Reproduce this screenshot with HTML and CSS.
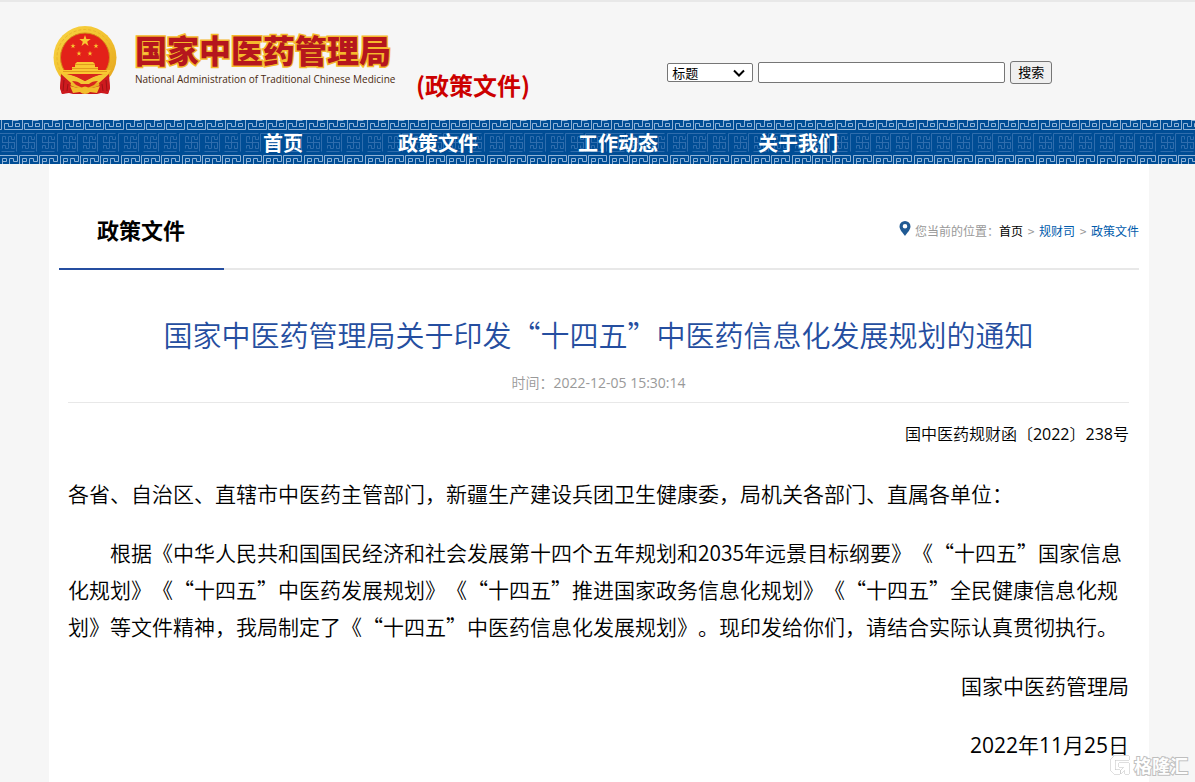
FILE: index.html
```html
<!DOCTYPE html>
<html lang="zh-CN">
<head>
<meta charset="utf-8">
<title>国家中医药管理局</title>
<link rel="stylesheet" href="styles.css">
</head>
<body>
<header class="header">
  <svg class="emblem" viewBox="0 0 64 70" aria-hidden="true">
    <defs>
      <linearGradient id="gold" x1="0" y1="0" x2="1" y2="1"><stop offset="0" stop-color="#f8d444"/><stop offset=".5" stop-color="#f2c22e"/><stop offset="1" stop-color="#e3a01c"/></linearGradient>
      <polygon id="star" points="0,-6 1.4,-1.9 5.7,-1.9 2.2,.7 3.5,4.9 0,2.3 -3.5,4.9 -2.2,.7 -5.7,-1.9 -1.4,-1.9"/>
    </defs>
    <path d="M9 47 7 62l2 6 7-1 4 1h24l4-1 7 1 2-6-2-15z" fill="#c8161d"/>
    <circle cx="32" cy="31.500" r="31.500" fill="url(#gold)"/>
    <circle cx="32" cy="31.500" r="28" fill="none" stroke="#eab52a" stroke-width="1" stroke-dasharray="3 2"/>
    <circle cx="32" cy="31.500" r="24.500" fill="#e32119" stroke="#d58b18" stroke-width="1"/>
    <g fill="#f9c831">
      <use href="#star" x="32" y="15"/>
      <use href="#star" transform="translate(20 20) scale(.45)"/>
      <use href="#star" transform="translate(43 20) scale(.45)"/>
      <use href="#star" transform="translate(26 27.500) scale(.45)"/>
      <use href="#star" transform="translate(37 27.500) scale(.45)"/>
      <path d="M24 36h16l2 2v3h3v3h13l-3 4H9l-3-4h13v-3h3v-3z"/>
    </g>
    <path d="M22 38.500h20M19 42.500h26M10 45.500h44" stroke="#e29a1e" stroke-width="1"/>
    <path d="M9 48q10 0 15 3l8 4 8-4q5-3 15-3-3 8-12 9l-11 4-11-4q-9-1-12-9z" fill="#f4c534"/>
    <path d="M15 48h12l5 3 5-3h12l-9 3-8 4-8-4z" fill="#d7251d"/>
    <path d="M19 55q6 0 9 3h8q3-3 9-3l-4 4-9 4-9-4z" fill="#d7251d"/>
    <path d="M17 60l8 2h3q4-3 8 0h3l8-2-3 7-7-1q-2 2-5 2t-5-2l-7 1z" fill="#f2bd2d"/>
    <path d="M8 48 7 62l2 6 7-2 2-9zM56 48l1 14-2 6-7-2-2-9z" fill="#cd1a1e"/>
    <path d="M11 54l-1 11M15 58l-1 7M53 54l1 11M49 58l1 7" stroke="#9c1216" stroke-width="1"/>
  </svg>
  <div class="brand">
    <div class="brand-cn">国家中医药管理局</div>
    <div class="brand-en">National Administration of Traditional Chinese Medicine</div>
  </div>
  <div class="section-name">(政策文件)</div>
  <form class="search">
    <div class="select-wrap">
      <select class="field" aria-label="搜索范围"><option>标题</option></select>
      <svg class="chevron" viewBox="0 0 12 8" aria-hidden="true"><path d="M1 1.500 6 6.500 11 1.500" fill="none" stroke="#000" stroke-width="2"/></svg>
    </div>
    <input class="query" type="text" aria-label="关键词">
    <button class="search-btn" type="button">搜索</button>
  </form>
</header>
<nav class="nav">
  <svg class="nav-pattern" width="100%" height="44" aria-hidden="true">
    <defs>
      <g id="edge" fill="none" stroke="#8fb2d6">
        <path d="M18.500 0V9.500H.5V3.500H4.500V6.500H8.500V0M8.500 .5H14.500M11.500 6.500H15.500V3.500H11.500V7"/>
      </g>
      <g id="edge-low" fill="none" stroke="#8fb2d6">
        <path d="M.5 10V.5H18.500V6.500H14.500V3.500H10.500V9M3.500 9V3.500H7.500V6.500H4"/>
      </g>
      <g id="swirl" fill="none" stroke="#2f6dad">
        <path d="M.5 18.500V.5H18.500M5.500 18.500H18.500M12.500 4V15M6 9.500H19M12.500 3.500H15.500V6.500H18.500V3.500M12.500 15.500H9.500V12.500H6.500V15.500M6.500 9.500V3.500H9.500V6.500M18.500 9.500V15.500H15.500V12.500"/>
      </g>
      <pattern id="fret" width="61" height="44" patternUnits="userSpaceOnUse">
        <use href="#edge" x="4" y="0"/><use href="#edge" x="24" y="0"/><use href="#edge" x="44" y="0"/><use href="#edge" x="-17" y="0"/>
        <use href="#swirl" x="-4" y="13"/><use href="#swirl" x="16" y="13"/><use href="#swirl" x="36" y="13"/><use href="#swirl" x="57" y="13"/>
        <use href="#edge-low" x="-1" y="35"/><use href="#edge-low" x="19" y="35"/><use href="#edge-low" x="39" y="35"/><use href="#edge-low" x="60" y="35"/>
      </pattern>
    </defs>
    <rect width="100%" height="44" fill="url(#fret)"/>
  </svg>
  <div class="nav-links">
    <a href="#">首页</a><a href="#">政策文件</a><a href="#">工作动态</a><a href="#">关于我们</a>
  </div>
</nav>
<main class="page">
  <div class="page-head">
    <h2 class="tab">政策文件</h2>
    <div class="crumbs">
      <svg class="pin" viewBox="0 0 12 15" aria-hidden="true"><path fill-rule="evenodd" d="M6 0a5.500 5.500 0 0 1 5.500 5.500C11.500 9 7.500 12.500 6 15 4.500 12.500.5 9 .5 5.500A5.500 5.500 0 0 1 6 0zm0 3a2.300 2.300 0 1 0 0 4.600A2.300 2.300 0 0 0 6 3z" fill="#205a94"/></svg>
      <span>您当前的位置：</span><a class="home" href="#">首页</a><span class="sep">&gt;</span><a href="#">规财司</a><span class="sep">&gt;</span><a href="#">政策文件</a>
    </div>
  </div>
  <article class="article">
    <h1 class="title">国家中医药管理局关于印发“十四五”中医药信息化发展规划的通知</h1>
    <div class="date">时间：<span class="num">2022-12-05 15:30:14</span></div>
    <p class="doc-no">国中医药规财函〔<span class="num">2022</span>〕<span class="num">238</span>号</p>
    <p>各省、自治区、直辖市中医药主管部门，新疆生产建设兵团卫生健康委，局机关各部门、直属各单位：</p>
    <p class="indent">根据《中华人民共和国国民经济和社会发展第十四个五年规划和2035年远景目标纲要》《“十四五”国家信息化规划》《“十四五”中医药发展规划》《“十四五”推进国家政务信息化规划》《“十四五”全民健康信息化规划》等文件精神，我局制定了《“十四五”中医药信息化发展规划》。现印发给你们，请结合实际认真贯彻执行。</p>
    <p class="right">国家中医药管理局</p>
    <p class="right"><span class="num">2022</span>年<span class="num">11</span>月<span class="num">25</span>日</p>
  </article>
</main>
<div class="watermark">
  <svg width="24" height="24" viewBox="0 0 24 24" aria-hidden="true"><path d="M21 7V3H6L3 6v12l3 3h6v-4H7V7zM11 10h10v11h-4v-4l-4 4v-4l3-3h-5z" fill="#fff" stroke="#b5b5b5"/></svg>
  <span>格隆汇</span>
</div>
</body>
</html>
```
FILE: styles.css
```css
* { box-sizing: border-box; }
body {
  margin: 0;
  background: #f6f6f6;
  color: #000;
  font-family: "Noto Sans CJK SC", sans-serif;
  text-spacing-trim: space-all;
  position: relative;
}
a { color: inherit; text-decoration: none; }
.header {
  display: flex;
  align-items: flex-start;
  height: 120px;
  padding-left: 53px;
  border-top: 2px solid #e8e8e8;
}
.emblem { width: 64px; height: 70px; margin-top: 24px; flex: none; }
.brand { margin: 28px 0 0 18px; white-space: nowrap; width: 260px; flex: none; }
.brand-cn {
  font-size: 32px;
  line-height: 38px;
  font-weight: 900;
  color: #b5161d;
  -webkit-text-stroke: 3px #f5b92c;
  paint-order: stroke fill;
}
.brand-en {
  font: 500 10px/22px "Open Sans", sans-serif;
  color: #4a2a10;
}
.section-name {
  margin: 65px 0 0 21px;
  font-size: 24px;
  line-height: 36px;
  font-weight: 700;
  color: #c00;
  white-space: nowrap;
}
.search { display: flex; align-items: center; margin: 58px 0 0 137px; height: 24px; }
.select-wrap { position: relative; }
.field {
  display: block;
  width: 86px;
  height: 19px;
  padding: 0 4px;
  border: 1px solid #767676;
  border-radius: 2px;
  background: #fff;
  color: #000;
  font: 13px/17px "Noto Sans CJK SC", sans-serif;
  appearance: none;
}
.chevron { position: absolute; right: 8px; top: 6px; width: 12px; height: 8px; pointer-events: none; }
.query {
  width: 247px;
  height: 21px;
  margin: 0 5px;
  border: 1px solid #767676;
  border-radius: 2px;
  background: #fff;
}
.search-btn {
  width: 42px;
  height: 23px;
  padding: 0;
  border: 1px solid #767676;
  border-radius: 3px;
  background: #efefef;
  color: #000;
  font: 13px/18px "Noto Sans CJK SC", sans-serif;
}
.nav { position: relative; height: 44px; background: #004d95; overflow: hidden; }
.nav-pattern { position: absolute; inset: 0; display: block; }
.nav-links {
  position: relative;
  display: grid;
  grid-template-columns: 135px 180px 180px auto;
  padding-left: 263px;
  color: #fff;
  font-size: 20px;
  font-weight: 700;
  line-height: 46px;
}
.page { margin: 0 46px 0 49px; padding: 0 10px 20px; background: #fff; }
.page-head {
  display: flex;
  justify-content: space-between;
  height: 106px;
  border-bottom: 2px solid #e8e8e8;
}
.tab {
  width: 165px;
  height: 106px;
  margin: 0;
  padding: 28px 0 0 38px;
  border-bottom: 2px solid #254ea0;
  font-size: 22px;
  line-height: 74px;
  font-weight: 700;
}
.crumbs { display: flex; align-items: center; height: 32px; margin-top: 50px; font-size: 12px; color: #999; }
.crumbs a { color: #005bac; }
.crumbs .home { color: #000; }
.sep { width: 16px; text-align: center; }
.pin { width: 12px; height: 15px; margin: 0 4px 4px 0; }
.article { padding: 0 10px 0 9px; font-size: 21px; line-height: 37px; font-weight: 350; }
.article p { margin: 0 0 22px; }
.num { font-family: "Open Sans", sans-serif; font-weight: 400; line-height: 1; }
.title {
  margin: 42px 0 0;
  font-size: 29px;
  line-height: 44px;
  font-weight: 350;
  text-align: center;
  color: #254ea0;
}
.date {
  margin-top: 14px;
  padding-bottom: 8px;
  border-bottom: 1px solid #e8e8e8;
  font-size: 14px;
  line-height: 24px;
  text-align: center;
  color: #999;
}
.article .doc-no { margin: 12px 0 23px; font-size: 16px; text-align: right; }
.article .indent { text-indent: 2em; }
.article .right { text-align: right; }
.article p:last-child { margin: 0; }
.watermark {
  position: absolute;
  right: 7px;
  bottom: 5px;
  display: flex;
  align-items: center;
  gap: 2px;
  font-size: 18px;
  line-height: 26px;
  font-weight: 700;
  color: #fff;
  -webkit-text-stroke: 2px #b5b5b5;
  paint-order: stroke fill;
  opacity: .85;
}
```
